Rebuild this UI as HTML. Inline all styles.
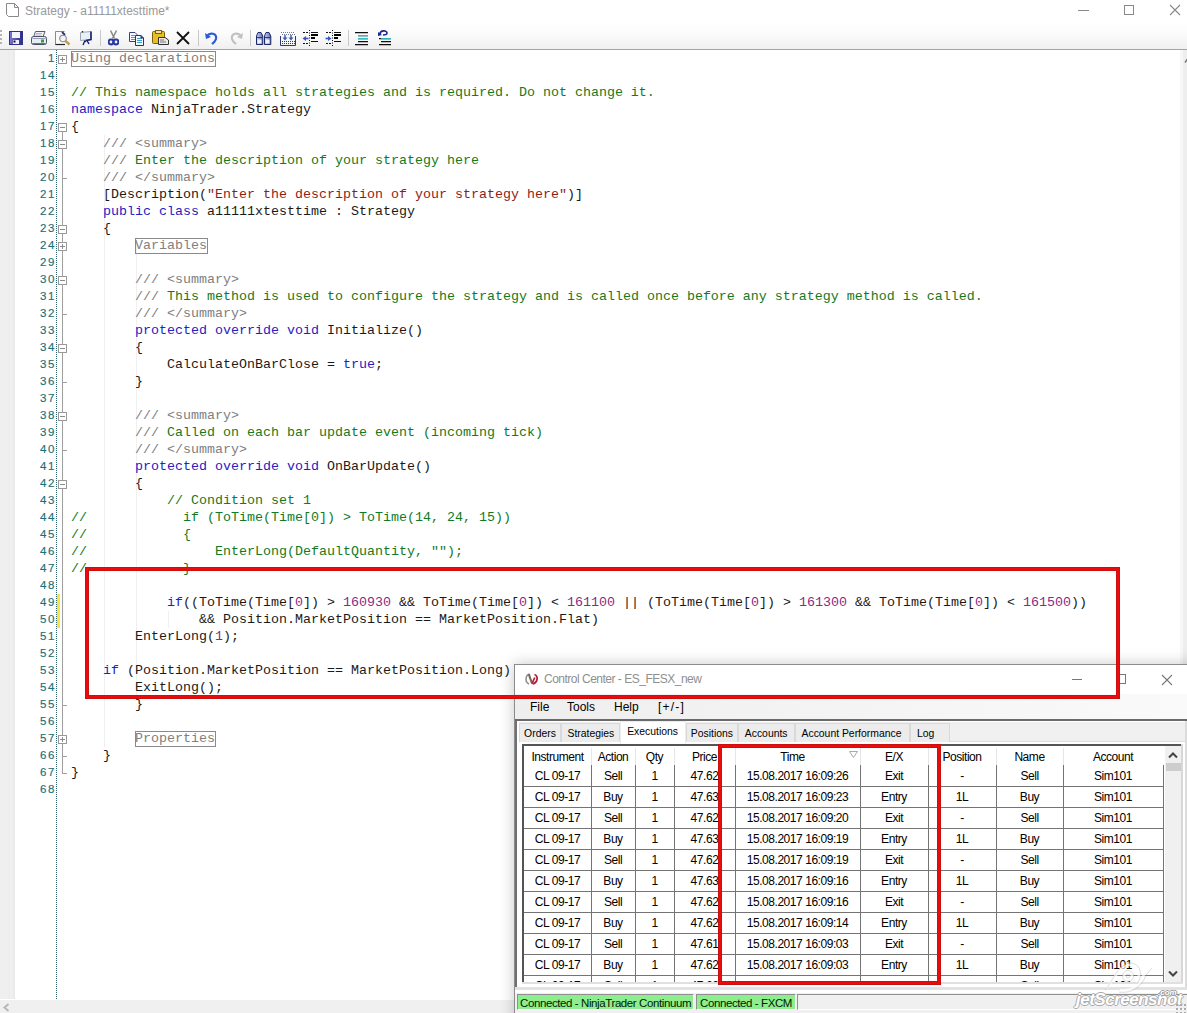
<!DOCTYPE html>
<html><head><meta charset="utf-8">
<style>
*{margin:0;padding:0;box-sizing:border-box}
html,body{width:1187px;height:1013px;overflow:hidden;background:#fff;position:relative;font-family:"Liberation Sans",sans-serif}
.abs{position:absolute}
/* title bar */
#title{position:absolute;left:0;top:0;width:1187px;height:24px;background:#fff}
#title .t{position:absolute;left:25px;top:3px;font-size:12px;color:#999;line-height:16px;white-space:nowrap}
/* toolbar */
#tb{position:absolute;left:0;top:24px;width:1187px;height:25px;background:linear-gradient(#fefefe,#fbfbfb 40%,#f0f0f0)}
#tbline{position:absolute;left:0;top:49px;width:1187px;height:1px;background:#a5a5a5}
/* editor */
#ed{position:absolute;left:0;top:50px;width:1187px;height:949px;background:#fff;overflow:hidden}
#gut{position:absolute;left:0;top:50px;width:15px;height:949px;background:#efefef}
#gut2{position:absolute;left:8px;top:50px;width:2px;height:949px;background:#ededed}
#gut3{position:absolute;left:13px;top:50px;width:2px;height:949px;background:#eaeaea}
.dots{position:absolute;left:56px;top:50px;width:1px;height:949px;background:repeating-linear-gradient(#2f5f6a 0 1px,transparent 1px 2px)}
.lnum{position:absolute;left:15px;width:41px;top:0;height:17px;line-height:17px;text-align:right;font-size:11.5px;color:#1b6f78;letter-spacing:1.6px;margin-top:0px;-webkit-text-stroke:0.15px #1b6f78}
.fbox{position:absolute;left:58px;width:9px;height:9px;border:1px solid #999;background:#fff}
.fbox .h{position:absolute;left:1px;top:3px;width:5px;height:1px;background:#8a8a8a}
.fbox .v{position:absolute;left:3px;top:1px;width:1px;height:5px;background:#8a8a8a}
.fline{position:absolute;left:62px;width:1px;background:#a0a0a0}
.ftick{position:absolute;left:62px;width:5px;height:1px;background:#a0a0a0}
.guide{position:absolute;width:1px;background:#f0f0f0}
.row{position:absolute;left:71px;height:17px;line-height:17px;font-family:"Liberation Mono",monospace;font-size:13.333px;white-space:pre;color:#000;transform:scaleY(0.89);transform-origin:0 12.5px}
.k{color:#2222c4}.c{color:#137a23}.d{color:#808080}.s{color:#8e1c1c}.n{color:#862a86}.t{color:#1a1a1a}
.cbox{position:absolute;height:16px;border:1px solid #8a8a8a}
.yel{position:absolute;left:57px;top:594px;width:3px;height:34px;background:#f5e642}
#vs{position:absolute;left:1180px;top:50px;width:7px;height:949px;background:linear-gradient(90deg,#f7f7f7 0 3px,#eeeeee 3px)}
#hs{position:absolute;left:0;top:1000px;width:520px;height:13px;background:#f0f0f0}
/* control center */
#cc{position:absolute;left:514px;top:664px;width:700px;height:400px;background:#f0f0f0;border:1px solid #8c8c8c;box-shadow:0 0 14px rgba(0,0,0,0.22)}
#cctitle{position:absolute;left:515px;top:665px;width:700px;height:29px;background:#fff}
#cctitle .t{position:absolute;left:29px;top:7px;font-size:12px;letter-spacing:-0.5px;color:#8f8f8f;white-space:nowrap}
.menu{position:absolute;top:699px;font-size:12px;color:#000;white-space:nowrap;line-height:16px}
#mline{position:absolute;left:515px;top:719px;width:700px;height:2px;background:#6a6a6a}
.tab{position:absolute;top:723px;height:19px;border:1px solid #d9d9d9;border-bottom:none;background:#ececec}
.tab.sel{top:721px;height:23px;background:#fff;border-color:#ececec}
.tabt{position:absolute;font-size:10.4px;line-height:12px;white-space:nowrap;color:#000}
#gridbox{position:absolute;left:522px;top:744px;width:661px;height:240px;background:#fff;border-left:2px solid #555;border-top:2px solid #555}
#gridclip{position:absolute;left:524px;top:746px;width:657px;height:236px;overflow:hidden}
.gh{position:absolute;top:747px;height:20px;line-height:20px;text-align:center;font-size:12px;letter-spacing:-0.45px;color:#000;white-space:nowrap}
.ghsep{position:absolute;top:748px;width:1px;height:17px;background:#e6e6e6}
.gc{position:absolute;height:21px;line-height:23px;text-align:center;font-size:12px;letter-spacing:-0.45px;color:#000;white-space:nowrap}
.grl{position:absolute;left:524px;width:639px;height:1px;background:#747474}
.gcl{position:absolute;top:765px;width:1px;height:217px;background:#747474}
#gsb{position:absolute;left:1164px;top:746px;width:17px;height:236px;background:#f0f0f0;border-left:1px solid #fff}
#status{position:absolute;left:515px;top:987px;width:700px;height:30px;background:#f0f0f0;border-top:3px solid #e2e2e6;box-shadow:inset 0 3px 0 #fff}
.sp{position:absolute;top:994px;height:16px;border-top:1px solid #8f8f8f;border-left:1px solid #8f8f8f;border-right:1px solid #fff;border-bottom:1px solid #fff;font-size:11.5px;letter-spacing:-0.4px;line-height:16px;white-space:nowrap;color:#001a00}
.green{background:#8eee8e}
.red{position:absolute;border:1px solid #c81010;box-shadow:inset 0 0 0 2px #ec0a0a,inset 0 0 0 3px #cc1010}
</style></head><body>
<div id="title">
  <svg class="abs" style="left:5px;top:2px" width="15" height="16" viewBox="0 0 15 16"><path d="M1.5 1.5 H9.5 L13.5 5.5 V14.5 H3.5 L1.5 12.5 Z M9.5 1.5 V5.5 H13.5" fill="none" stroke="#8a8a8a" stroke-width="1"/></svg>
  <div class="t">Strategy - a11111xtesttime*</div>
  <svg class="abs" style="left:1078px;top:5px" width="12" height="12"><path d="M0 5.5 H11" stroke="#888" stroke-width="1"/></svg>
  <svg class="abs" style="left:1123px;top:4px" width="12" height="12"><rect x="1.5" y="1.5" width="9" height="9" fill="none" stroke="#888" stroke-width="1"/></svg>
  <svg class="abs" style="left:1169px;top:4px" width="12" height="12"><path d="M1 1 L11 11 M11 1 L1 11" stroke="#888" stroke-width="1.1"/></svg>
</div>
<div id="tb">
  <!-- grip -->
  <div class="abs" style="left:0;top:6px;width:2px;height:14px;background:repeating-linear-gradient(#b4b4b4 0 2px,transparent 2px 4px)"></div>
  <!-- save -->
  <svg class="abs" style="left:9px;top:7px" width="14" height="14" viewBox="0 0 14 14"><defs><linearGradient id="sg" x1="0" x2="1"><stop offset="0" stop-color="#8080d8"/><stop offset="1" stop-color="#26268a"/></linearGradient></defs><rect x="0" y="0" width="14" height="14" fill="url(#sg)"/><rect x="0.5" y="0.5" width="13" height="13" fill="none" stroke="#30308a" stroke-width="1"/><rect x="3" y="1" width="8" height="6" fill="#f4f4fc"/><rect x="4" y="9" width="6" height="4" fill="#f0f0f8"/><rect x="4.5" y="9.5" width="2" height="2" fill="#111"/></svg>
  <!-- print -->
  <svg class="abs" style="left:31px;top:7px" width="16" height="14" viewBox="0 0 16 14"><path d="M4.5 0.5 H14 L12 6 H2.5 Z" fill="#f4f2f8" stroke="#555a70" stroke-width="1"/><path d="M5 2.5 H11 M4.5 4 H10.5" stroke="#b0a0c8" stroke-width="0.8"/><rect x="0.5" y="5.5" width="15" height="8" rx="2" fill="#e8ecf4" stroke="#4a5068"/><rect x="1.5" y="7" width="13" height="1" fill="#9aa0b4"/><rect x="10" y="8.5" width="3" height="3" fill="#1cb01c"/><rect x="1.5" y="12" width="13" height="1" fill="#6a7088"/></svg>
  <!-- preview -->
  <svg class="abs" style="left:55px;top:7px" width="16" height="15" viewBox="0 0 16 15"><path d="M9.5 0.5 H0.5 V13.5 H10" fill="#fafafa" stroke="#8a8a8a"/><path d="M0.5 13.5 H10" stroke="#222" stroke-width="1.2"/><path d="M7 1 L10 4" stroke="#2a3070" stroke-width="1.8"/><circle cx="8" cy="7.5" r="3.3" fill="#f4f4f8" stroke="#888" stroke-width="1.1"/><path d="M10.5 10 L14.5 13.5" stroke="#c0a050" stroke-width="2.4"/></svg>
  <!-- board -->
  <svg class="abs" style="left:80px;top:7px" width="12" height="15" viewBox="0 0 12 15"><path d="M0.5 1.5 L11 0.5 V8.5 L0.5 9.5 Z" fill="#e8f0f4" stroke="#8890a0" stroke-width="0.8"/><path d="M11 0.5 V8.5 L6 9.5" fill="none" stroke="#1a2070" stroke-width="1.6"/><path d="M5 9.5 L3 14 M7 9.5 L9 13 M4 11 L6 10" stroke="#1a2070" stroke-width="1.4"/><circle cx="2.5" cy="0.8" r="0.8" fill="#111"/></svg>
  <div class="abs" style="left:100px;top:6px;width:1px;height:16px;background:#c8c8c8"></div>
  <!-- cut -->
  <svg class="abs" style="left:108px;top:6px" width="11" height="16" viewBox="0 0 11 16"><path d="M2.5 0.5 L6.5 8.5 M8.5 0.5 L4.5 8.5" stroke="#8a8a8a" stroke-width="1.6"/><circle cx="3" cy="12" r="2.4" fill="none" stroke="#2838a0" stroke-width="2"/><circle cx="8" cy="12" r="2.4" fill="none" stroke="#2838a0" stroke-width="2"/></svg>
  <!-- copy -->
  <svg class="abs" style="left:128px;top:7px" width="17" height="15" viewBox="0 0 17 15"><path d="M1.5 1.5 H7 L9 3.5 V10.5 H1.5 Z" fill="#f8faff" stroke="#3a3f80"/><path d="M3 4.5 H7 M3 6.5 H7 M3 8.5 H7" stroke="#6a8ad0"/><path d="M7.5 4.5 H13 L15.5 7 V14.5 H7.5 Z" fill="#f4f8ff" stroke="#2a3070"/><path d="M9 7.5 H14 M9 9.5 H14 M9 11.5 H14" stroke="#40a0c8"/><path d="M13 4.5 V7 H15.5" fill="#3050b0" stroke="#2a3070"/></svg>
  <!-- paste -->
  <svg class="abs" style="left:152px;top:6px" width="17" height="16" viewBox="0 0 17 16"><rect x="0.5" y="1.5" width="12" height="12" rx="1" fill="#e6c020" stroke="#7a6010"/><rect x="3.5" y="0.5" width="6" height="3" fill="#f0e0a0" stroke="#7a6010"/><path d="M6.5 7.5 H13 L16.5 10 V14.5 H6.5 Z" fill="#e8e8e8" stroke="#333"/><path d="M8 10 H12 M8 12 H14" stroke="#777"/></svg>
  <!-- delete X -->
  <svg class="abs" style="left:176px;top:7px" width="14" height="14" viewBox="0 0 14 14"><path d="M1 1 L13 13 M13 1 L1 13" stroke="#111" stroke-width="1.8"/></svg>
  <div class="abs" style="left:198px;top:6px;width:1px;height:16px;background:#c8c8c8"></div>
  <!-- undo -->
  <svg class="abs" style="left:205px;top:7px" width="14" height="14" viewBox="0 0 14 14"><path d="M2 5 C5 1 12 2 11 8 C10 11 8 12 7 13" fill="none" stroke="#2a5ad8" stroke-width="2.2"/><path d="M0 2 L1 8 L6 6 Z" fill="#2a5ad8"/></svg>
  <!-- redo -->
  <svg class="abs" style="left:229px;top:7px" width="14" height="14" viewBox="0 0 14 14"><path d="M12 5 C9 1 2 2 3 8 C4 11 6 12 7 13" fill="none" stroke="#c0c0c0" stroke-width="2.2"/><path d="M14 2 L13 8 L8 6 Z" fill="#c0c0c0"/></svg>
  <div class="abs" style="left:250px;top:6px;width:1px;height:16px;background:#c8c8c8"></div>
  <!-- binoculars -->
  <svg class="abs" style="left:256px;top:7px" width="16" height="14" viewBox="0 0 16 14"><defs><linearGradient id="bg" x1="0" x2="1"><stop offset="0" stop-color="#c8d4f0"/><stop offset="1" stop-color="#5a6ab0"/></linearGradient></defs><path d="M0.5 13.5 V5 L2 1.5 H5 L6.8 5 V13.5 Z" fill="url(#bg)" stroke="#1c2a6a"/><path d="M8.5 13.5 V5 L10 1.5 H13 L14.8 5 V13.5 Z" fill="url(#bg)" stroke="#1c2a6a"/><rect x="1.5" y="8.5" width="4" height="4" fill="#eef2fc"/><rect x="9.5" y="8.5" width="4" height="4" fill="#eef2fc"/><path d="M1 6.5 H6.5 M9 6.5 H14.5" stroke="#2a3a80" stroke-width="1"/></svg>
  <!-- find in box -->
  <svg class="abs" style="left:280px;top:7px" width="16" height="15" viewBox="0 0 16 15"><path d="M1 1.5 H15 M2 3.5 H15" stroke="#6a7a98" stroke-dasharray="1 1"/><path d="M0.5 5 V14.5 H15.5 V5" fill="none" stroke="#2a3a78"/><path d="M2 10.5 H15 M2 12.5 H15" stroke="#3a3a50" stroke-dasharray="1 1"/><path d="M5 4 V8 M11 4 V8" stroke="#3a5ab8" stroke-width="1.4"/><path d="M2.5 6.5 L5 9.5 L7.5 6.5 Z M8.5 6.5 L11 9.5 L13.5 6.5 Z" fill="#3a5ab8"/></svg>
  <!-- outdent -->
  <svg class="abs" style="left:302px;top:6px" width="17" height="16" viewBox="0 0 17 16"><path d="M7.5 0 V16" stroke="#111" stroke-dasharray="1 1.5"/><path d="M1 2.5 H6 M1 13.5 H6" stroke="#111" stroke-width="1" stroke-dasharray="2 1"/><path d="M9 2.5 H16 M9 11.5 H16" stroke="#111" stroke-width="1"/><path d="M9 5 H16 M9 8 H13" stroke="#000" stroke-width="2"/><path d="M0.5 8.5 L4 6 V11 Z" fill="#3858c0"/><path d="M3 8.5 H6.5" stroke="#3858c0" stroke-width="1.6"/></svg>
  <!-- indent -->
  <svg class="abs" style="left:325px;top:6px" width="17" height="16" viewBox="0 0 17 16"><path d="M7.5 0 V16" stroke="#111" stroke-dasharray="1 1.5"/><path d="M1 2.5 H6 M1 13.5 H6" stroke="#111" stroke-width="1" stroke-dasharray="2 1"/><path d="M9 2.5 H16 M9 11.5 H16" stroke="#111" stroke-width="1"/><path d="M9 5 H16 M9 8 H13" stroke="#000" stroke-width="2"/><path d="M6.5 8.5 L3 6 V11 Z" fill="#3858c0"/><path d="M0.5 8.5 H4" stroke="#3858c0" stroke-width="1.6"/></svg>
  <div class="abs" style="left:348px;top:6px;width:1px;height:16px;background:#c8c8c8"></div>
  <!-- comment lines -->
  <svg class="abs" style="left:355px;top:8px" width="14" height="14" viewBox="0 0 14 14"><path d="M0 0.7 H13 M3 3.7 H13 M3 6.7 H13 M3 9.7 H13 M0 12.7 H13" stroke="#111" stroke-width="1.3"/><path d="M3 3.7 H13 M3 6.7 H13" stroke="#30c0c8" stroke-width="1.3"/></svg>
  <!-- uncomment -->
  <svg class="abs" style="left:378px;top:6px" width="14" height="16" viewBox="0 0 14 16"><path d="M2 4 C2 0 9 0 9 3 C9 5 6 5 5 5" fill="none" stroke="#1a2a90" stroke-width="1.6"/><path d="M0 2 L4 5 L0 6 Z" fill="#1a2a90"/><path d="M1 8.7 H13 M3 11.7 H13 M1 14.7 H13" stroke="#111" stroke-width="1.3"/><path d="M3 8.7 H13" stroke="#30c0c8" stroke-width="1.3"/></svg>
</div>
<div id="tbline"></div>
<div id="ed"></div>
<div id="gut"></div>
<div id="gut2"></div><div id="gut3"></div>
<div class="guide" style="left:103.5px;top:135px;height:612px"></div>
<div class="guide" style="left:135.5px;top:237px;height:459px"></div>
<div class="guide" style="left:167.5px;top:611px;height:17px"></div>
<div class="dots"></div>
<div class="yel"></div>
<div class="fline" style="top:132px;height:641px"></div>
<div class="lnum" style="top:50px">1</div>
<div class="fbox" style="top:55px"><i class=h></i><i class=v></i></div>
<div class="lnum" style="top:67px">14</div>
<div class="lnum" style="top:84px">15</div>
<div class="lnum" style="top:101px">16</div>
<div class="lnum" style="top:118px">17</div>
<div class="fbox" style="top:123px"><i class=h></i></div>
<div class="lnum" style="top:135px">18</div>
<div class="fbox" style="top:140px"><i class=h></i></div>
<div class="lnum" style="top:152px">19</div>
<div class="lnum" style="top:169px">20</div>
<div class="ftick" style="top:178px"></div>
<div class="lnum" style="top:186px">21</div>
<div class="lnum" style="top:203px">22</div>
<div class="lnum" style="top:220px">23</div>
<div class="fbox" style="top:225px"><i class=h></i></div>
<div class="lnum" style="top:237px">24</div>
<div class="fbox" style="top:242px"><i class=h></i><i class=v></i></div>
<div class="lnum" style="top:254px">29</div>
<div class="lnum" style="top:271px">30</div>
<div class="fbox" style="top:276px"><i class=h></i></div>
<div class="lnum" style="top:288px">31</div>
<div class="lnum" style="top:305px">32</div>
<div class="ftick" style="top:314px"></div>
<div class="lnum" style="top:322px">33</div>
<div class="lnum" style="top:339px">34</div>
<div class="fbox" style="top:344px"><i class=h></i></div>
<div class="lnum" style="top:356px">35</div>
<div class="lnum" style="top:373px">36</div>
<div class="ftick" style="top:382px"></div>
<div class="lnum" style="top:390px">37</div>
<div class="lnum" style="top:407px">38</div>
<div class="fbox" style="top:412px"><i class=h></i></div>
<div class="lnum" style="top:424px">39</div>
<div class="lnum" style="top:441px">40</div>
<div class="ftick" style="top:450px"></div>
<div class="lnum" style="top:458px">41</div>
<div class="lnum" style="top:475px">42</div>
<div class="fbox" style="top:480px"><i class=h></i></div>
<div class="lnum" style="top:492px">43</div>
<div class="lnum" style="top:509px">44</div>
<div class="lnum" style="top:526px">45</div>
<div class="lnum" style="top:543px">46</div>
<div class="lnum" style="top:560px">47</div>
<div class="lnum" style="top:577px">48</div>
<div class="lnum" style="top:594px">49</div>
<div class="lnum" style="top:611px">50</div>
<div class="lnum" style="top:628px">51</div>
<div class="lnum" style="top:645px">52</div>
<div class="lnum" style="top:662px">53</div>
<div class="lnum" style="top:679px">54</div>
<div class="lnum" style="top:696px">55</div>
<div class="ftick" style="top:705px"></div>
<div class="lnum" style="top:713px">56</div>
<div class="lnum" style="top:730px">57</div>
<div class="fbox" style="top:735px"><i class=h></i><i class=v></i></div>
<div class="lnum" style="top:747px">66</div>
<div class="ftick" style="top:756px"></div>
<div class="lnum" style="top:764px">67</div>
<div class="ftick" style="top:773px"></div>
<div class="lnum" style="top:781px">68</div>
<div class="cbox" style="left:71.0px;top:51px;width:145.0px"></div>
<div class="row" style="top:50px"><span class="d">Using declarations</span></div>
<div class="row" style="top:84px"><span class="c">// This namespace holds all strategies and is required. Do not change it.</span></div>
<div class="row" style="top:101px"><span class="k">namespace</span><span class="t"> NinjaTrader.Strategy</span></div>
<div class="row" style="top:118px"><span class="t">{</span></div>
<div class="row" style="top:135px"><span class="t">    </span><span class="d">/// &lt;summary&gt;</span></div>
<div class="row" style="top:152px"><span class="t">    </span><span class="d">///</span><span class="c"> Enter the description of your strategy here</span></div>
<div class="row" style="top:169px"><span class="t">    </span><span class="d">/// &lt;/summary&gt;</span></div>
<div class="row" style="top:186px"><span class="t">    [Description(</span><span class="s">&quot;Enter the description of your strategy here&quot;</span><span class="t">)]</span></div>
<div class="row" style="top:203px"><span class="t">    </span><span class="k">public</span><span class="t"> </span><span class="k">class</span><span class="t"> a11111xtesttime : Strategy</span></div>
<div class="row" style="top:220px"><span class="t">    {</span></div>
<div class="cbox" style="left:135.0px;top:238px;width:73.0px"></div>
<div class="row" style="top:237px"><span class="t">        </span><span class="d">Variables</span></div>
<div class="row" style="top:271px"><span class="t">        </span><span class="d">/// &lt;summary&gt;</span></div>
<div class="row" style="top:288px"><span class="t">        </span><span class="d">///</span><span class="c"> This method is used to configure the strategy and is called once before any strategy method is called.</span></div>
<div class="row" style="top:305px"><span class="t">        </span><span class="d">/// &lt;/summary&gt;</span></div>
<div class="row" style="top:322px"><span class="t">        </span><span class="k">protected</span><span class="t"> </span><span class="k">override</span><span class="t"> </span><span class="k">void</span><span class="t"> Initialize()</span></div>
<div class="row" style="top:339px"><span class="t">        {</span></div>
<div class="row" style="top:356px"><span class="t">            CalculateOnBarClose = </span><span class="k">true</span><span class="t">;</span></div>
<div class="row" style="top:373px"><span class="t">        }</span></div>
<div class="row" style="top:407px"><span class="t">        </span><span class="d">/// &lt;summary&gt;</span></div>
<div class="row" style="top:424px"><span class="t">        </span><span class="d">///</span><span class="c"> Called on each bar update event (incoming tick)</span></div>
<div class="row" style="top:441px"><span class="t">        </span><span class="d">/// &lt;/summary&gt;</span></div>
<div class="row" style="top:458px"><span class="t">        </span><span class="k">protected</span><span class="t"> </span><span class="k">override</span><span class="t"> </span><span class="k">void</span><span class="t"> OnBarUpdate()</span></div>
<div class="row" style="top:475px"><span class="t">        {</span></div>
<div class="row" style="top:492px"><span class="t">            </span><span class="c">// Condition set 1</span></div>
<div class="row" style="top:509px"><span class="c">//            if (ToTime(Time[0]) &gt; ToTime(14, 24, 15))</span></div>
<div class="row" style="top:526px"><span class="c">//            {</span></div>
<div class="row" style="top:543px"><span class="c">//                EnterLong(DefaultQuantity, &quot;&quot;);</span></div>
<div class="row" style="top:560px"><span class="c">//            }</span></div>
<div class="row" style="top:594px"><span class="t">            </span><span class="k">if</span><span class="t">((ToTime(Time[</span><span class="n">0</span><span class="t">])</span><span class="t"> &gt; </span><span class="n">160930</span><span class="t"> &amp;&amp; ToTime(Time[</span><span class="n">0</span><span class="t">]) &lt; </span><span class="n">161100</span><span class="t"> || (ToTime(Time[</span><span class="n">0</span><span class="t">]) &gt; </span><span class="n">161300</span><span class="t"> &amp;&amp; ToTime(Time[</span><span class="n">0</span><span class="t">]) &lt; </span><span class="n">161500</span><span class="t">))</span></div>
<div class="row" style="top:611px"><span class="t">                &amp;&amp; Position.MarketPosition == MarketPosition.Flat)</span></div>
<div class="row" style="top:628px"><span class="t">        EnterLong(</span><span class="n">1</span><span class="t">);</span></div>
<div class="row" style="top:662px"><span class="t">    </span><span class="k">if</span><span class="t"> (Position.MarketPosition == MarketPosition.Long)</span></div>
<div class="row" style="top:679px"><span class="t">        ExitLong();</span></div>
<div class="row" style="top:696px"><span class="t">        }</span></div>
<div class="cbox" style="left:135.0px;top:731px;width:81.0px"></div>
<div class="row" style="top:730px"><span class="t">        </span><span class="d">Properties</span></div>
<div class="row" style="top:747px"><span class="t">    }</span></div>
<div class="row" style="top:764px"><span class="t">}</span></div>
<div id="vs"><svg class="abs" style="left:4px;top:7px" width="6" height="7"><path d="M1 5.5 L4 1.5 L7 5.5" fill="none" stroke="#777" stroke-width="1.5"/></svg></div>
<div id="hs"><svg class="abs" style="left:2px;top:3px" width="8" height="10"><path d="M6.5 1 L2.5 4.5 L6.5 8" fill="none" stroke="#b8b8b8" stroke-width="2"/></svg></div>

<!-- control center -->
<div id="cc"></div>
<div id="cctitle">
  <svg class="abs" style="left:9px;top:8px" width="15" height="12" viewBox="0 0 15 12"><path d="M5.5 1 C1.5 2 0.5 9 5 11" fill="none" stroke="#8c8c8c" stroke-width="1.5"/><path d="M4.8 1.2 L8 10.5" fill="none" stroke="#7a6458" stroke-width="2"/><path d="M8 10.5 L10.8 4.5 M10.5 1.5 C14.5 3 14 9.5 8.5 11" fill="none" stroke="#b01c34" stroke-width="1.7"/></svg>
  <div class="t">Control Center - ES_FESX_new</div>
  <svg class="abs" style="left:557px;top:9px" width="12" height="12"><path d="M0 5.5 H10" stroke="#777" stroke-width="1"/></svg>
  <svg class="abs" style="left:600px;top:8px" width="12" height="12"><rect x="1.5" y="1.5" width="9" height="9" fill="none" stroke="#777" stroke-width="1"/></svg>
  <svg class="abs" style="left:646px;top:9px" width="12" height="12"><path d="M1 1 L11 11 M11 1 L1 11" stroke="#777" stroke-width="1.1"/></svg>
</div>
<div class="abs" style="left:515px;top:694px;width:672px;height:25px;background:linear-gradient(90deg,#eeeeee,#f3f3f3 40%,#fafafa)"></div>
<div class="menu" style="left:530px">File</div>
<div class="menu" style="left:567px">Tools</div>
<div class="menu" style="left:614px">Help</div>
<div class="menu" style="left:658px;letter-spacing:1.2px">[+/-]</div>
<div id="mline"></div>
<div class="abs" style="left:515px;top:721px;width:2px;height:268px;background:#707070"></div>
<div class="abs" style="left:517px;top:721px;width:668px;height:1px;background:#fff"></div>
<div class="abs" style="left:517px;top:722px;width:2px;height:266px;background:#fff"></div>
<div class="abs" style="left:517px;top:741px;width:668px;height:246px;background:#fff"></div>
<div class="abs" style="left:519px;top:741px;width:666px;height:1px;background:#dcdcdc"></div>
<div class="abs" style="left:1185px;top:721px;width:2px;height:268px;background:#dcdcdc"></div>
<div class="tab" style="left:519px;width:42px"></div>
<div class="tabt" style="left:524.1px;top:728px">Orders</div>
<div class="tab" style="left:561px;width:59px"></div>
<div class="tabt" style="left:567.5px;top:728px">Strategies</div>
<div class="tab sel" style="left:620px;width:66px"></div>
<div class="tabt" style="left:627.2px;top:726px">Executions</div>
<div class="tab" style="left:686px;width:52px"></div>
<div class="tabt" style="left:690.8px;top:728px">Positions</div>
<div class="tab" style="left:738px;width:57px"></div>
<div class="tabt" style="left:744.8px;top:728px">Accounts</div>
<div class="tab" style="left:795px;width:115px"></div>
<div class="tabt" style="left:801.5px;top:728px">Account Performance</div>
<div class="tab" style="left:910px;width:40px"></div>
<div class="tabt" style="left:916.9px;top:728px">Log</div>
<div id="gridbox"></div>
<div style="position:absolute;left:0;top:0;width:1187px;height:982px;overflow:hidden"><div class="gh" style="left:524px;width:67px">Instrument</div>
<div class="gh" style="left:591px;width:44px">Action</div>
<div class="gh" style="left:635px;width:39px">Qty</div>
<div class="gh" style="left:674px;width:61px">Price</div>
<div class="gh" style="left:735px;width:115px">Time</div>
<div class="gh" style="left:860px;width:68px">E/X</div>
<div class="gh" style="left:928px;width:68px">Position</div>
<div class="gh" style="left:996px;width:67px">Name</div>
<div class="gh" style="left:1063px;width:100px">Account</div>
<div class="ghsep" style="left:591px"></div>
<div class="ghsep" style="left:635px"></div>
<div class="ghsep" style="left:674px"></div>
<div class="ghsep" style="left:735px"></div>
<div class="ghsep" style="left:860px"></div>
<div class="ghsep" style="left:928px"></div>
<div class="ghsep" style="left:996px"></div>
<div class="ghsep" style="left:1063px"></div>
<div class="gc" style="left:524px;width:67px;top:765px">CL 09-17</div>
<div class="gc" style="left:591px;width:44px;top:765px">Sell</div>
<div class="gc" style="left:635px;width:39px;top:765px">1</div>
<div class="gc" style="left:674px;width:61px;top:765px">47.62</div>
<div class="gc" style="left:735px;width:125px;top:765px">15.08.2017 16:09:26</div>
<div class="gc" style="left:860px;width:68px;top:765px">Exit</div>
<div class="gc" style="left:928px;width:68px;top:765px">-</div>
<div class="gc" style="left:996px;width:67px;top:765px">Sell</div>
<div class="gc" style="left:1063px;width:100px;top:765px">Sim101</div>
<div class="gc" style="left:524px;width:67px;top:786px">CL 09-17</div>
<div class="gc" style="left:591px;width:44px;top:786px">Buy</div>
<div class="gc" style="left:635px;width:39px;top:786px">1</div>
<div class="gc" style="left:674px;width:61px;top:786px">47.63</div>
<div class="gc" style="left:735px;width:125px;top:786px">15.08.2017 16:09:23</div>
<div class="gc" style="left:860px;width:68px;top:786px">Entry</div>
<div class="gc" style="left:928px;width:68px;top:786px">1L</div>
<div class="gc" style="left:996px;width:67px;top:786px">Buy</div>
<div class="gc" style="left:1063px;width:100px;top:786px">Sim101</div>
<div class="gc" style="left:524px;width:67px;top:807px">CL 09-17</div>
<div class="gc" style="left:591px;width:44px;top:807px">Sell</div>
<div class="gc" style="left:635px;width:39px;top:807px">1</div>
<div class="gc" style="left:674px;width:61px;top:807px">47.62</div>
<div class="gc" style="left:735px;width:125px;top:807px">15.08.2017 16:09:20</div>
<div class="gc" style="left:860px;width:68px;top:807px">Exit</div>
<div class="gc" style="left:928px;width:68px;top:807px">-</div>
<div class="gc" style="left:996px;width:67px;top:807px">Sell</div>
<div class="gc" style="left:1063px;width:100px;top:807px">Sim101</div>
<div class="gc" style="left:524px;width:67px;top:828px">CL 09-17</div>
<div class="gc" style="left:591px;width:44px;top:828px">Buy</div>
<div class="gc" style="left:635px;width:39px;top:828px">1</div>
<div class="gc" style="left:674px;width:61px;top:828px">47.63</div>
<div class="gc" style="left:735px;width:125px;top:828px">15.08.2017 16:09:19</div>
<div class="gc" style="left:860px;width:68px;top:828px">Entry</div>
<div class="gc" style="left:928px;width:68px;top:828px">1L</div>
<div class="gc" style="left:996px;width:67px;top:828px">Buy</div>
<div class="gc" style="left:1063px;width:100px;top:828px">Sim101</div>
<div class="gc" style="left:524px;width:67px;top:849px">CL 09-17</div>
<div class="gc" style="left:591px;width:44px;top:849px">Sell</div>
<div class="gc" style="left:635px;width:39px;top:849px">1</div>
<div class="gc" style="left:674px;width:61px;top:849px">47.62</div>
<div class="gc" style="left:735px;width:125px;top:849px">15.08.2017 16:09:19</div>
<div class="gc" style="left:860px;width:68px;top:849px">Exit</div>
<div class="gc" style="left:928px;width:68px;top:849px">-</div>
<div class="gc" style="left:996px;width:67px;top:849px">Sell</div>
<div class="gc" style="left:1063px;width:100px;top:849px">Sim101</div>
<div class="gc" style="left:524px;width:67px;top:870px">CL 09-17</div>
<div class="gc" style="left:591px;width:44px;top:870px">Buy</div>
<div class="gc" style="left:635px;width:39px;top:870px">1</div>
<div class="gc" style="left:674px;width:61px;top:870px">47.63</div>
<div class="gc" style="left:735px;width:125px;top:870px">15.08.2017 16:09:16</div>
<div class="gc" style="left:860px;width:68px;top:870px">Entry</div>
<div class="gc" style="left:928px;width:68px;top:870px">1L</div>
<div class="gc" style="left:996px;width:67px;top:870px">Buy</div>
<div class="gc" style="left:1063px;width:100px;top:870px">Sim101</div>
<div class="gc" style="left:524px;width:67px;top:891px">CL 09-17</div>
<div class="gc" style="left:591px;width:44px;top:891px">Sell</div>
<div class="gc" style="left:635px;width:39px;top:891px">1</div>
<div class="gc" style="left:674px;width:61px;top:891px">47.62</div>
<div class="gc" style="left:735px;width:125px;top:891px">15.08.2017 16:09:16</div>
<div class="gc" style="left:860px;width:68px;top:891px">Exit</div>
<div class="gc" style="left:928px;width:68px;top:891px">-</div>
<div class="gc" style="left:996px;width:67px;top:891px">Sell</div>
<div class="gc" style="left:1063px;width:100px;top:891px">Sim101</div>
<div class="gc" style="left:524px;width:67px;top:912px">CL 09-17</div>
<div class="gc" style="left:591px;width:44px;top:912px">Buy</div>
<div class="gc" style="left:635px;width:39px;top:912px">1</div>
<div class="gc" style="left:674px;width:61px;top:912px">47.62</div>
<div class="gc" style="left:735px;width:125px;top:912px">15.08.2017 16:09:14</div>
<div class="gc" style="left:860px;width:68px;top:912px">Entry</div>
<div class="gc" style="left:928px;width:68px;top:912px">1L</div>
<div class="gc" style="left:996px;width:67px;top:912px">Buy</div>
<div class="gc" style="left:1063px;width:100px;top:912px">Sim101</div>
<div class="gc" style="left:524px;width:67px;top:933px">CL 09-17</div>
<div class="gc" style="left:591px;width:44px;top:933px">Sell</div>
<div class="gc" style="left:635px;width:39px;top:933px">1</div>
<div class="gc" style="left:674px;width:61px;top:933px">47.61</div>
<div class="gc" style="left:735px;width:125px;top:933px">15.08.2017 16:09:03</div>
<div class="gc" style="left:860px;width:68px;top:933px">Exit</div>
<div class="gc" style="left:928px;width:68px;top:933px">-</div>
<div class="gc" style="left:996px;width:67px;top:933px">Sell</div>
<div class="gc" style="left:1063px;width:100px;top:933px">Sim101</div>
<div class="gc" style="left:524px;width:67px;top:954px">CL 09-17</div>
<div class="gc" style="left:591px;width:44px;top:954px">Buy</div>
<div class="gc" style="left:635px;width:39px;top:954px">1</div>
<div class="gc" style="left:674px;width:61px;top:954px">47.62</div>
<div class="gc" style="left:735px;width:125px;top:954px">15.08.2017 16:09:03</div>
<div class="gc" style="left:860px;width:68px;top:954px">Entry</div>
<div class="gc" style="left:928px;width:68px;top:954px">1L</div>
<div class="gc" style="left:996px;width:67px;top:954px">Buy</div>
<div class="gc" style="left:1063px;width:100px;top:954px">Sim101</div>
<div class="gc" style="left:524px;width:67px;top:975px">CL 09-17</div>
<div class="gc" style="left:591px;width:44px;top:975px">Sell</div>
<div class="gc" style="left:635px;width:39px;top:975px">1</div>
<div class="gc" style="left:674px;width:61px;top:975px">47.62</div>
<div class="gc" style="left:735px;width:125px;top:975px">15.08.2017 16:08:58</div>
<div class="gc" style="left:860px;width:68px;top:975px">Exit</div>
<div class="gc" style="left:928px;width:68px;top:975px">-</div>
<div class="gc" style="left:996px;width:67px;top:975px">Sell</div>
<div class="gc" style="left:1063px;width:100px;top:975px">Sim101</div>
<div class="grl" style="top:786px"></div>
<div class="grl" style="top:807px"></div>
<div class="grl" style="top:828px"></div>
<div class="grl" style="top:849px"></div>
<div class="grl" style="top:870px"></div>
<div class="grl" style="top:891px"></div>
<div class="grl" style="top:912px"></div>
<div class="grl" style="top:933px"></div>
<div class="grl" style="top:954px"></div>
<div class="grl" style="top:975px"></div>
<div class="gcl" style="left:591px"></div>
<div class="gcl" style="left:635px"></div>
<div class="gcl" style="left:674px"></div>
<div class="gcl" style="left:735px"></div>
<div class="gcl" style="left:860px"></div>
<div class="gcl" style="left:928px"></div>
<div class="gcl" style="left:996px"></div>
<div class="gcl" style="left:1063px"></div>
<div class="gcl" style="left:1163px"></div></div>
<svg class="abs" style="left:849px;top:751px" width="9" height="7"><path d="M0.5 0.5 H8.5 L4.5 6.5 Z" fill="none" stroke="#aaa" stroke-width="1"/></svg>
<div id="gsb">
  <svg class="abs" style="left:3px;top:5px" width="10" height="8"><path d="M1 6.5 L5 2.5 L9 6.5" fill="none" stroke="#444" stroke-width="2"/></svg>
  <div class="abs" style="left:1px;top:17px;width:15px;height:8px;background:#cdcdcd"></div>
  <svg class="abs" style="left:3px;top:224px" width="10" height="8"><path d="M1 1.5 L5 5.5 L9 1.5" fill="none" stroke="#444" stroke-width="2"/></svg>
</div>
<div class="abs" style="left:1181px;top:744px;width:2px;height:240px;background:#d8d8d8"></div>
<div class="abs" style="left:522px;top:982px;width:661px;height:2px;background:#e0e0e0"></div>
<div id="status"></div>
<div class="sp green" style="left:517px;width:177px;padding-left:2px">Connected - NinjaTrader Continuum</div>
<div class="sp green" style="left:696px;width:100px;padding-left:3px">Connected - FXCM</div>
<div class="sp" style="left:797px;width:400px"></div>

<!-- red annotation boxes -->
<div class="red" style="left:85px;top:567px;width:1035px;height:132px"></div>
<div class="red" style="left:718px;top:744px;width:223px;height:241px"></div>

<!-- watermark -->
<svg class="abs" style="left:1100px;top:960px" width="56" height="34" viewBox="0 0 56 34"><g fill="none" stroke="#fff" stroke-width="2.5" opacity="0.7"><path d="M6 28 C14 20 18 8 28 5 C38 3 42 14 36 22 M20 30 C30 32 40 26 44 14 L50 8"/><circle cx="28" cy="16" r="4"/></g><g fill="none" stroke="#b0b0b0" stroke-width="0.7" opacity="0.6"><path d="M5 30 C13 21 17 6 28 3.5 C40 1.5 44 14 37 24 M19 32 C31 34 42 27 46 15 L52 8"/><circle cx="28" cy="16" r="5.5"/><circle cx="28" cy="16" r="2"/></g></svg>
<div class="abs" style="left:1076px;top:991px;font-size:17px;font-weight:bold;font-style:italic;color:#fff;letter-spacing:-0.5px;white-space:nowrap;line-height:18px;text-shadow:-1px 0 #aaa,1px 0 #aaa,0 1px #aaa,0 -1px #aaa">jetScreenshot</div>
<div class="abs" style="left:1158px;top:989px;font-size:8px;font-weight:bold;font-style:italic;color:#fff;line-height:8px;text-shadow:-1px 0 #999,1px 0 #999,0 1px #999,0 -1px #999">.com</div>
<div class="abs" style="left:1175px;top:1003px;width:12px;height:10px;background:radial-gradient(circle,#aaa 0.8px,transparent 1px) 0 0/4px 4px"></div>
</body></html>
